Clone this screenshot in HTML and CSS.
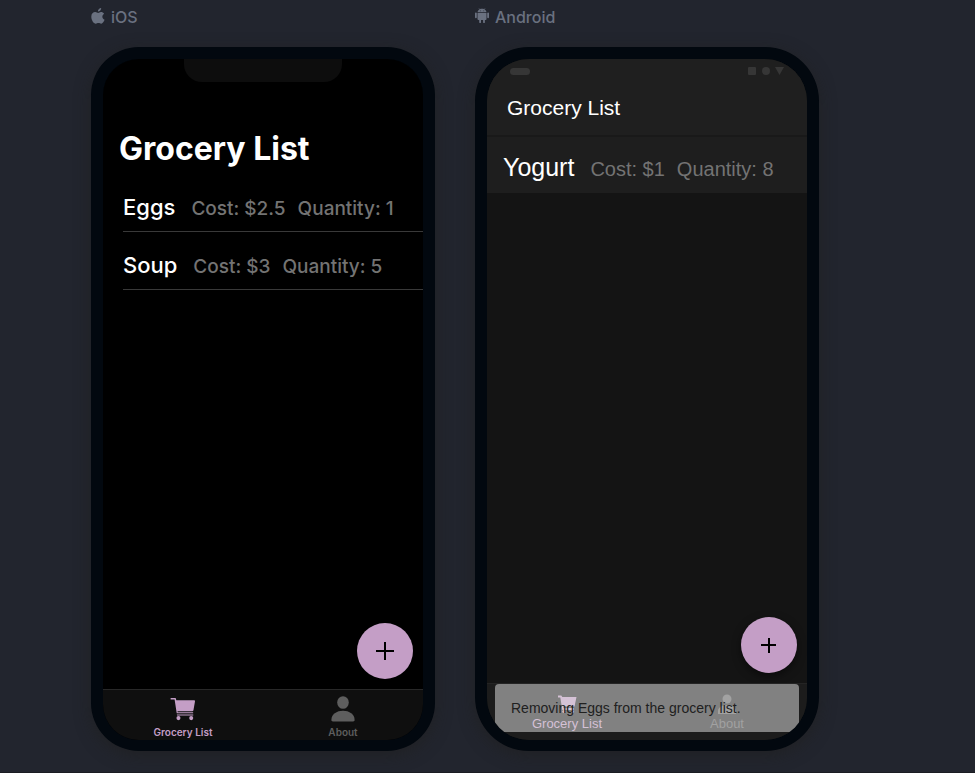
FILE: index.html
```html
<!DOCTYPE html>
<html lang="en">
<head>
<meta charset="utf-8">
<meta name="viewport" content="width=device-width, initial-scale=1">
<title>Grocery List</title>
<link rel="stylesheet" href="styles.css">
</head>
<body>
<main class="preview">
  <section class="device">
    <h2 class="platform">
      <svg class="platform-icon" viewBox="0 0 14 16" aria-hidden="true"><path d="M10.200 0c.1 1.800-1.500 3.600-3.300 3.500C6.700 1.800 8.400.1 10.200 0zM9.900 4.100c1.300 0 2.500.7 3.200 1.700-2.500 1.500-2.200 4.900.5 6-.6 1.700-2 3.900-3.400 3.900-1 0-1.500-.6-2.700-.6s-1.700.6-2.700.6C2.600 15.700.3 11.900.3 8.700c0-3 1.900-4.600 3.900-4.600 1.300 0 2.200.8 3 .8.700 0 1.600-.8 2.700-.8z"/></svg>
      iOS
    </h2>
    <div class="phone ios">
      <div class="screen">
        <div class="notch"></div>
        <h1 class="large-title">Grocery List</h1>
        <ul class="items">
          <li class="item"><span class="name">Eggs</span><span class="detail">Cost: $2.5</span><span class="detail">Quantity: 1</span></li>
          <li class="item"><span class="name">Soup</span><span class="detail">Cost: $3</span><span class="detail">Quantity: 5</span></li>
        </ul>
        <button class="fab" type="button" aria-label="Add item"><svg viewBox="0 0 18 18" aria-hidden="true"><path d="M9 0v18M0 9h18"/></svg></button>
        <nav class="tabs">
          <a class="tab selected" href="#list"><svg class="tab-icon" viewBox="0 0 30 30" aria-hidden="true"><path d="M2.200 3h5.200l.7 2.400h18.200c.8 0 1.200.6 1.100 1.200l-1.600 9.200c-.2.700-.6 1-1.200 1H9.300l.2 1.100h16v1H8.500L6.300 4.600H2.200z"/><path d="M8.600 20.200h17v1H8.800z"/><circle cx="10.300" cy="23.900" r="2.100"/><circle cx="23.500" cy="23.900" r="2.100"/></svg><span>Grocery List</span></a>
          <a class="tab" href="#about"><svg class="tab-icon" viewBox="0 0 30 30" aria-hidden="true"><ellipse cx="15" cy="7.800" rx="6" ry="6.500"/><path d="M3 25.900C3 19.900 8.500 16.400 15 16.400s12 3.500 12 9.500c0 1-.6 1.500-1.500 1.500h-21C3.600 27.400 3 26.900 3 25.900z"/></svg><span>About</span></a>
        </nav>
      </div>
    </div>
  </section>
  <section class="device">
    <h2 class="platform">
      <svg class="platform-icon" viewBox="0 0 14 16" aria-hidden="true"><path d="M0 5.300q0-.9.900-.9t.9.900v4q0 .9-.9.900t-.9-.9zM12.200 5.300q0-.9.900-.9t.9.900v4q0 .9-.9.900t-.9-.9zM2.500 4.900h9v6q0 1-.9 1h-.7v2.300q0 .9-.9.900t-.9-.9v-2.300H6v2.300q0 .9-.9.900t-.9-.9v-2.300h-.7q-1 0-1-1zM2.500 4.300c.1-1.300.8-2.200 1.900-2.800L3.600.2l.3-.1.800 1.200c1.500-.6 3.100-.6 4.600 0l.8-1.200.3.1-.8 1.300c1.100.6 1.800 1.500 1.900 2.800zM5 2.500v.8h.7v-.8zM8.400 2.500v.8h.7v-.8z"/></svg>
      Android
    </h2>
    <div class="phone android">
      <div class="screen">
        <div class="status" aria-hidden="true"><span class="pill"></span><svg class="signals" viewBox="0 0 36 8"><rect width="8" height="8" rx="1"/><circle cx="18" cy="4" r="4"/><path d="M27 0h9l-4.500 8z"/></svg></div>
        <h1 class="toolbar">Grocery List</h1>
        <ul class="items">
          <li class="item"><span class="name">Yogurt</span><span class="detail">Cost: $1</span><span class="detail">Quantity: 8</span></li>
        </ul>
        <button class="fab" type="button" aria-label="Add item"><svg viewBox="0 0 18 18" aria-hidden="true"><path d="M9 2v15M1 9h15"/></svg></button>
        <nav class="tabs">
          <a class="tab selected" href="#list"><svg class="tab-icon" viewBox="0 0 22 22" aria-hidden="true"><path d="M2 2.500h3.300l1 1.500H20.500l-2 9.500H7.300l.3 1.500H18v2H6.300L4.300 4.500H2z"/><circle cx="7.800" cy="18.500" r="1.500"/><circle cx="16.500" cy="18.500" r="1.500"/></svg><span>Grocery List</span></a>
          <a class="tab" href="#about"><svg class="tab-icon" viewBox="0 0 22 22" aria-hidden="true"><circle cx="11" cy="6" r="4.500"/><path d="M2 18c0-4 5-6 9-6s9 2 9 6v3H2z"/></svg><span>About</span></a>
        </nav>
        <div class="toast" role="status">Removing Eggs from the grocery list.</div>
      </div>
    </div>
  </section>
</main>
</body>
</html>
```
FILE: styles.css
```css
* {
  box-sizing: border-box;
}

body {
  margin: 0;
  min-height: 100vh;
  border-bottom: 1px solid #1a1c22;
  background: #22252e;
  font-family: Inter, sans-serif;
}

h1,
h2,
ul {
  margin: 0;
  padding: 0;
}

button {
  font: inherit;
}

.preview {
  display: flex;
  flex-wrap: wrap;
  gap: 40px;
  padding: 7px 91px 21px;
}

.device {
  flex: 0 1 344px;
}

.platform {
  display: flex;
  align-items: center;
  gap: 6px;
  margin-bottom: 20px;
  color: #6a7180;
  font-size: 16px;
  font-weight: 500;
  line-height: 20px;
}

.platform-icon {
  width: 14px;
  height: 16px;
  margin-bottom: 3px;
  fill: currentColor;
}

.phone {
  border: solid #02080f;
  border-width: 12px 12px 11px;
  background: #02080f;
  box-shadow: 0 4px 16px rgba(32, 32, 32, 0.7);
}

.screen {
  position: relative;
  display: flex;
  flex-direction: column;
  min-height: 681px;
  overflow: hidden;
}

.ios {
  border-radius: 48px;
}

.ios .screen {
  border-radius: 36px;
  background: #000;
}

.android {
  border-radius: 54px;
  font-family: "Liberation Sans", sans-serif;
}

.android .screen {
  border-radius: 42px;
  background: #141414;
}

.notch {
  width: 158px;
  height: 23px;
  margin: 0 auto;
  border-radius: 0 0 18px 18px;
  background: #0d0d0d;
}

.large-title {
  padding: 46px 16px 0;
  color: #fff;
  font-size: 32px;
  font-weight: 700;
  line-height: 42px;
}

.items {
  list-style: none;
}

.item {
  display: flex;
  align-items: baseline;
  height: 58px;
  color: #fff;
  white-space: nowrap;
}

.name {
  margin-right: 16px;
  font-size: 23px;
  line-height: 28px;
}

.detail {
  margin-right: 12px;
  color: #737373;
  font-size: 20px;
  line-height: 28px;
}

.ios .items {
  padding: 4px 0 0 20px;
}

.ios .item {
  padding-top: 19px;
  border-bottom: 1px solid #393939;
}

.ios .name {
  font-size: 22px;
  font-weight: 500;
}

.ios .detail {
  font-size: 19px;
  font-weight: 500;
}

.android .item {
  height: 56px;
  padding: 16px 16px 0;
  background: #1e1e1e;
}

.android .name {
  font-size: 25px;
}

.fab {
  display: grid;
  place-items: center;
  width: 56px;
  height: 56px;
  margin: auto 10px 10px auto;
  padding: 0;
  border: 0;
  border-radius: 50%;
  background: #c49ec6;
}

.fab svg {
  width: 18px;
  height: 18px;
  fill: none;
  stroke: #000;
  stroke-width: 2;
}

.android .fab {
  box-shadow: 0 3px 8px rgba(0, 0, 0, 0.5);
}

.tabs {
  display: flex;
}

.tab {
  display: flex;
  flex: 1;
  flex-direction: column;
  align-items: center;
  color: #5e5e5e;
  text-decoration: none;
}

.tab-icon {
  fill: currentColor;
}

.selected {
  color: #c49ec6;
}

.ios .tabs {
  border-top: 1px solid #282828;
  background: #0f0f0f;
}

.ios .tab {
  height: 50px;
  padding-top: 5px;
  font-size: 10px;
  font-weight: 600;
  line-height: 16px;
}

.ios .tab-icon {
  width: 30px;
  height: 30px;
}

.status {
  display: flex;
  align-items: center;
  justify-content: space-between;
  height: 24px;
  padding: 0 23px;
  background: #1f1f1f;
}

.pill {
  width: 20px;
  height: 7px;
  border-radius: 4px;
  background: #363636;
}

.signals {
  width: 36px;
  height: 8px;
  fill: #363636;
}

.toolbar {
  padding: 0 20px 2px;
  border-bottom: 2px solid #191919;
  background: #1f1f1f;
  color: #fff;
  font-size: 21px;
  font-weight: 500;
  line-height: 50px;
}

.android .tabs {
  border-top: 1px solid #242424;
  background: #1c1c1c;
}

.android .tab {
  height: 56px;
  padding-top: 9px;
  font-size: 13px;
  line-height: 18px;
}

.android .tab-icon {
  width: 22px;
  height: 22px;
}

.toast {
  position: absolute;
  right: 8px;
  bottom: 8px;
  left: 8px;
  padding: 14px 16px;
  border-radius: 4px;
  background: rgba(229, 229, 229, 0.5);
  color: #202020;
  font-size: 14px;
  line-height: 20px;
}
```
